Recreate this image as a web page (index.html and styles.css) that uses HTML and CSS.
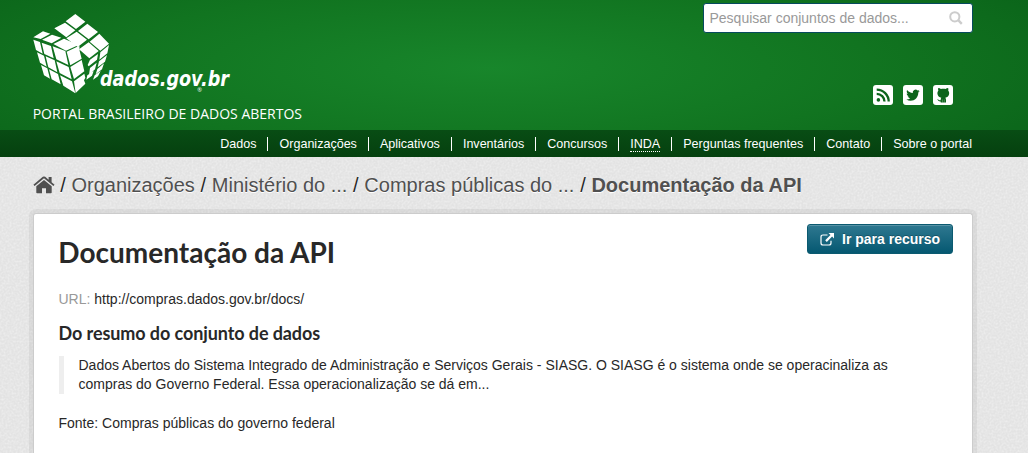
FILE: index.html
```html
<!DOCTYPE html>
<html lang="pt-BR">
<head>
<meta charset="utf-8">
<title>Documentação da API - dados.gov.br</title>
<link rel="stylesheet" href="styles.css">
</head>
<body>
<div class="top">
<header class="masthead">
  <div class="brand">
    <svg class="logo" width="210" height="88" viewBox="0 0 630 264" aria-label="dados.gov.br">
      <g fill="#fff">
        <path d="M136 12l30 23-28 22-31-23zM105 38l31 23-27 21-36-27zM172 41l32 25-28 22-32-25zM208 71l29 30-26 21-32-27zM140 65l31 24-28 22-34-26zM176 97l30 26-28 22-31-27z"/>
        <path d="M10 82l29-18 22 7-29 16zM36 89l30-15 28 9-29 17zM70 102l32-16 44 19-38 17z"/>
        <path d="M10 89l20 7 8 35-20-11zM35 98l28 10 8 37-28-13zM68 109l38 14 9 42-36-17zM21 127l21 10 8 33-20-12zM47 139l27 12 8 36-27-15zM79 154l37 17 9 37-36-19zM33 165l19 10 8 31-18-10zM57 178l27 14 8 31-27-15zM90 196l36 18 10 36-36-23z"/>
        <path d="M110 125l38-18 1 16 6 23-34 20zM121 171l34-21 8 34-31 23zM132 214l31-23 3 12-4 8 4 10-29 28z"/>
        <path d="M211 127l26-22-5 25-24 19zM180 149l24-17-3 17-25 20-3-4zM207 154l24-19-6 20-22 17zM180 174l20-16-5 20-18 16zM202 177l20-17-6 18-19 15zM172 196l19-13-5 14-17 12zM194 196l18-13-8 16-15 10z"/>
      </g>
      <text class="logo-name" x="210" y="229" textLength="387" lengthAdjust="spacingAndGlyphs">dados.gov.br</text>
      <text class="logo-mark" x="502" y="247">®</text>
    </svg>
    <p class="tagline">PORTAL BRASILEIRO DE DADOS ABERTOS</p>
  </div>
  <div class="tools">
    <div class="search"><span>Pesquisar conjuntos de dados...</span>
      <svg width="14" height="14" viewBox="0 0 14 14" fill="none" stroke="#ccc" stroke-width="2"><circle cx="5.8" cy="5.8" r="4.6"/><path d="M9.2 9.2l3.6 3.6" stroke-width="2.4"/></svg>
    </div>
    <div class="social">
      <svg width="20" height="20" viewBox="0 0 20 20"><rect width="20" height="20" rx="3" fill="#fff"/><g fill="none" stroke="#0c641b" stroke-width="2.3"><path d="M3.7 8.8a7.8 7.8 0 0 1 7.8 7.8M3.7 4.6a12 12 0 0 1 12 12"/></g><circle cx="5.4" cy="14.9" r="1.8" fill="#0c641b"/></svg>
      <svg width="20" height="20" viewBox="0 0 20 20"><rect width="20" height="20" rx="3" fill="#fff"/><path fill="#0c641b" d="M16.800 5.900c-.5.2-1 .4-1.600.4.6-.3 1-.9 1.200-1.500-.5.3-1.100.5-1.800.7a2.800 2.800 0 0 0-4.800 2.500c-2.300-.1-4.400-1.200-5.700-2.900-.7 1.200-.4 2.900.8 3.700-.4 0-.9-.1-1.200-.3 0 1.400 1 2.500 2.200 2.800-.4.1-.8.1-1.200 0 .3 1.100 1.400 1.900 2.600 1.900-1.200.9-2.600 1.300-4 1.200 5.700 3.400 12.100-.5 12-7 .6-.4 1.100-.9 1.500-1.500z"/></svg>
      <svg width="20" height="20" viewBox="0 0 20 20"><rect width="20" height="20" rx="3" fill="#fff"/><path fill="#0c641b" d="M5.300 3c1 0 1.900.4 2.600.9 1.500-.3 3.300-.3 4.600 0 .8-.6 1.700-.9 2.600-.9.4 1 .3 1.800.1 2.500 1 1.200 1.200 2.700.8 4.100-.5 1.900-1.900 2.800-3.700 3.100.5.6.7 1.200.7 2v2.800H7.700v-1c-1.800.2-2.400-.8-2.900-1.500l-.9-.8c1.600-.1 2.100 1.400 3.800 1.100 0-.7.100-1.900.6-2.600-1.900-.3-3.200-1.200-3.700-3.100-.4-1.400-.2-2.900.8-4.100-.3-.7-.5-1.600-.1-2.500z"/><path d="M9.500 14.500v3M11.300 14.500v3" stroke="#fff" stroke-opacity=".4" stroke-width=".6"/></svg>
    </div>
  </div>
</header>
<nav class="menu">
  <a>Dados</a><a>Organizações</a><a>Aplicativos</a><a>Inventários</a><a>Concursos</a><a><abbr>INDA</abbr></a><a>Perguntas frequentes</a><a>Contato</a><a>Sobre o portal</a>
</nav>
</div>
<main class="main">
  <svg class="grain" width="1028" height="296"><filter id="noise"><feTurbulence type="fractalNoise" baseFrequency=".5" numOctaves="2"/><feColorMatrix values="0 0 0 0 1  0 0 0 0 1  0 0 0 0 1  1.6 0 0 0 -.6"/></filter><rect width="1028" height="296" filter="url(#noise)"/></svg>
  <div class="crumbs">
    <svg width="22" height="18" viewBox="0 0 22 18" fill="#505050"><path d="M11 3.900L3.300 10.300V16.400q0 .8.800.8H9v-5h4v5h4.900q.8 0 .8-.8V10.300z"/><path d="M11 .4q-.7 0-1.200.4L.4 8.700l1.200 1.400L11 2.300l9.400 7.800 1.200-1.400-3-2.500V.9h-3v2.800L12.200.8Q11.700.4 11 .4z"/></svg>
    <span class="sep">/</span><a>Organizações</a><span class="sep">/</span><a>Ministério do ...</a><span class="sep">/</span><a>Compras públicas do ...</a><span class="sep">/</span><a class="active">Documentação da API</a>
  </div>
  <section class="card">
    <div class="card-head">
      <h1>Documentação da API</h1>
      <a class="button"><svg width="14" height="13" viewBox="0 0 14 13"><path d="M7.500 2H3Q1 2 1 4v6q0 2 2 2h6q2 0 2-2V7.800" fill="none" stroke="#fff" stroke-width="1.200"/><path d="M8.500 0H14v5.500l-1.900-1.900-5.300 5.300-1.600-1.600 5.300-5.300z" fill="#fff"/></svg>Ir para recurso</a>
    </div>
    <p class="url"><span>URL:</span> http://compras.dados.gov.br/docs/</p>
    <h2>Do resumo do conjunto de dados</h2>
    <blockquote>Dados Abertos do Sistema Integrado de Administração e Serviços Gerais - SIASG. O SIASG é o sistema onde se operacinaliza as compras do Governo Federal. Essa operacionalização se dá em...</blockquote>
    <p class="source">Fonte: Compras públicas do governo federal</p>
  </section>
</main>
</body>
</html>
```
FILE: styles.css
```css
* { box-sizing: border-box; }
body { margin: 0; width: 1028px; height: 453px; overflow: hidden; display: flex; flex-direction: column; font: 14px/20px "Liberation Sans", Arial, sans-serif; color: #282828; }
p, h1, h2, blockquote { margin: 0; }
svg { display: block; flex: none; }

.top { height: 157px; background: radial-gradient(ellipse 640px 135px at 490px 68px, #18862b 0%, #117420 60%, #0b651a 100%); }
.masthead { height: 130px; padding: 0 55px 0 30px; display: flex; justify-content: space-between; }
.brand { padding-top: 10px; }
.logo-name { font: italic bold 61px "DejaVu Sans Condensed", "DejaVu Sans", sans-serif; fill: #fff; }
.logo-mark { font: 17px "Open Sans", sans-serif; fill: #fff; }
.tagline { margin: 6px 0 0 2.7px; font: 14px/20px "Open Sans", sans-serif; color: #fff; }
.tools { display: flex; flex-direction: column; padding-top: 3px; }
.search { width: 270px; height: 30px; padding: 0 9px 0 5.5px; display: flex; align-items: center; justify-content: space-between; background: #fff; border: 1px solid #064a5e; border-radius: 3px; color: #999; }
.social { display: flex; gap: 10px; justify-content: flex-end; padding: 52px 20px 0 0; }

.menu { height: 27px; padding: 7px 56px 0 0; display: flex; justify-content: flex-end; background: linear-gradient(#084d14, #05400f); font-size: 12.55px; line-height: 14px; color: #fff; }
.menu a { height: 14px; padding-left: 11px; margin-left: 11px; border-left: 1px solid #fff; }
.menu a:first-child { border: 0; }
.menu abbr { text-decoration: none; border-bottom: 1px dotted #fff; display: block; }

.main { position: relative; height: 296px; overflow: hidden; padding: 0 55px 0 33px; background: #e3e3e3; }
.grain { position: absolute; left: 0; top: 0; opacity: .5; }
.crumbs { position: relative; height: 56px; display: flex; align-items: center; font-size: 20px; color: #505050; text-shadow: 0 1px 0 #fff; white-space: nowrap; }
.crumbs svg { margin-left: -.5px; }
.sep { margin: 0 5.7px; color: #282828; }
.active { font-weight: bold; }
.card { position: relative; height: 240px; padding: 10px 19px 0 25px; background: #fff; border: 1px solid #ccc; border-bottom: 0; border-radius: 3px 3px 0 0; box-shadow: 0 0 0 4px rgba(0, 0, 0, .05); }
.card-head { display: flex; justify-content: space-between; margin-left: -.7px; }
h1 { padding-top: 8px; font: bold 28px/40px Lato, sans-serif; }
.button { height: 30px; width: 146px; white-space: nowrap; padding: 0 0 0 12px; display: flex; align-items: center; gap: 8px; color: #fff; font-weight: bold; text-shadow: 0 -1px 0 rgba(0, 0, 0, .25); background: linear-gradient(#2f7890, #055871); border: 1px solid #0b5a70; border-radius: 3px; box-shadow: inset 0 1px 0 rgba(255, 255, 255, .2); }
.url { margin: 17px 0 0 -.5px; }
.url span { color: #999; }
h2 { margin: 12px 0 0 -.5px; font: bold 18px/24px Lato, sans-serif; letter-spacing: -.09px; }
blockquote { margin: 11px 35px 0 -.5px; padding-left: 15px; border-left: 5px solid #eee; line-height: 19px; }
.source { margin: 19px 0 0 -.5px; }
```
